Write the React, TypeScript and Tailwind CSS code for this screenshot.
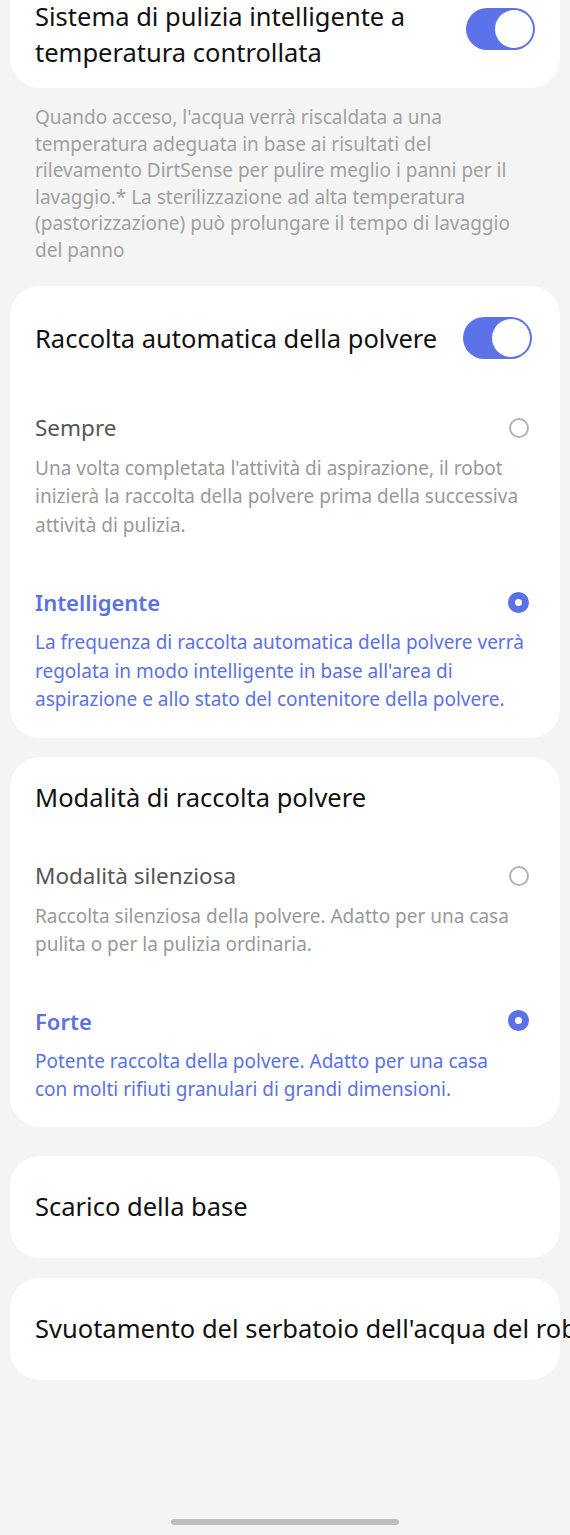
const Toggle = () => (
  <div className="w-[69px] h-[42px] rounded-full bg-[#5b72e8] p-[2px] flex justify-end shrink-0">
    <div className="w-[38px] h-[38px] rounded-full bg-white" />
  </div>
);

const Radio = ({ on }: { on?: boolean }) =>
  on ? (
    <div className="w-[21px] h-[21px] rounded-full border-[7px] border-[#5b71e6] bg-white shrink-0" />
  ) : (
    <div className="w-[20px] h-[20px] rounded-full border-2 border-[#b3b3b3] shrink-0" />
  );

type Option = { title: string; desc: string; on?: boolean; narrow?: boolean };

const OptionRow = ({ opt, mt }: { opt: Option; mt: string }) => (
  <div className={mt}>
    <div className="flex items-center justify-between pr-[3px]">
      <span
        className={
          opt.on
            ? "text-[22px] leading-[32px] font-semibold text-[#5b71e6]"
            : "text-[22.5px] leading-[32px] text-[#555]"
        }
      >
        {opt.title}
      </span>
      <Radio on={opt.on} />
    </div>
    <p
      className={
        (opt.on ? "text-[#5b71e6]" : "text-[#999]") +
        (opt.narrow ? " pr-[14px]" : "") +
        " mt-[10px] text-[19px] leading-[28.5px]"
      }
    >
      {opt.desc}
    </p>
  </div>
);

const raccolta: Option[] = [
  {
    title: "Sempre",
    desc: "Una volta completata l'attività di aspirazione, il robot inizierà la raccolta della polvere prima della successiva attività di pulizia.",
  },
  {
    title: "Intelligente",
    desc: "La frequenza di raccolta automatica della polvere verrà regolata in modo intelligente in base all'area di aspirazione e allo stato del contenitore della polvere.",
    on: true,
  },
];

const modalita: Option[] = [
  {
    title: "Modalità silenziosa",
    desc: "Raccolta silenziosa della polvere. Adatto per una casa pulita o per la pulizia ordinaria.",
  },
  {
    title: "Forte",
    desc: "Potente raccolta della polvere. Adatto per una casa con molti rifiuti granulari di grandi dimensioni.",
    on: true,
    narrow: true,
  },
];

export default function App() {
  return (
    <div
      className="w-[570px] h-[1535px] bg-[#f4f4f4] overflow-hidden flex flex-col"
      style={{ fontFamily: '"Noto Sans", "Open Sans", sans-serif' }}
    >
      {/* top card, scrolled partly off */}
      <div className="mx-[10px] -mt-[30px] bg-white rounded-[30px] pt-[28px] pb-[18px] pl-[25px] pr-[25px] flex items-start justify-between">
        <h2 className="text-[25.5px] leading-[36px] text-[#111]">
          Sistema di pulizia intelligente a<br />temperatura controllata
        </h2>
        <div className="mt-[10px]">
          <Toggle />
        </div>
      </div>
      <p className="mt-[16px] pl-[35px] pr-[30px] text-[19px] leading-[26.6px] text-[#a0a0a0]">
        Quando acceso, l'acqua verrà riscaldata a una temperatura adeguata in base ai risultati del
        rilevamento DirtSense per pulire meglio i panni per il lavaggio.* La sterilizzazione ad alta
        temperatura (pastorizzazione) può prolungare il tempo di lavaggio del panno
      </p>

      {/* auto collection */}
      <div className="mx-[10px] mt-[22px] bg-white rounded-[30px] pt-[31px] pb-[24px] pl-[25px] pr-[28px]">
        <div className="flex items-center justify-between">
          <h2 className="text-[25.5px] leading-[36px] text-[#111] whitespace-nowrap">
            Raccolta automatica della polvere
          </h2>
          <Toggle />
        </div>
        <OptionRow opt={raccolta[0]} mt="mt-[53px]" />
        <OptionRow opt={raccolta[1]} mt="mt-[47px]" />
      </div>

      {/* mode */}
      <div className="mx-[10px] mt-[19px] bg-white rounded-[30px] pt-[22px] pb-[23px] pl-[25px] pr-[28px]">
        <h2 className="text-[25.5px] leading-[36px] text-[#111]">Modalità di raccolta polvere</h2>
        <OptionRow opt={modalita[0]} mt="mt-[45px]" />
        <OptionRow opt={modalita[1]} mt="mt-[46px]" />
      </div>

      <div className="mx-[10px] mt-[29px] h-[102px] bg-white rounded-[30px] pl-[25px] flex items-center">
        <span className="text-[25.5px] text-[#111] whitespace-nowrap">Scarico della base</span>
      </div>
      <div className="mx-[10px] mt-[20px] h-[102px] bg-white rounded-[30px] pl-[25px] flex items-center">
        <span className="text-[25.5px] text-[#111] whitespace-nowrap">
          Svuotamento del serbatoio dell'acqua del robot
        </span>
      </div>

      <div className="mt-auto mb-[10px] self-center w-[228px] h-[6px] rounded-full bg-[#bdbdbd]" />
    </div>
  );
}
